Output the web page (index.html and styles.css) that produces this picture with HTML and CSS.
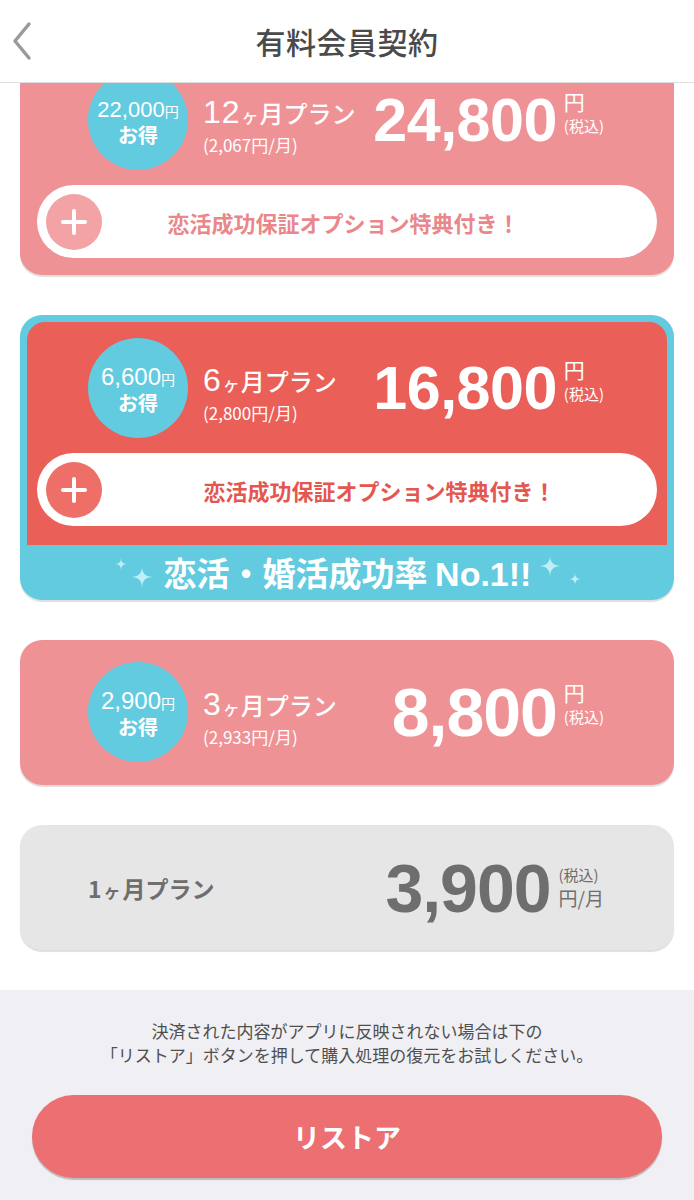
FILE: index.html
```html
<!DOCTYPE html>
<html lang="ja">
<head>
<meta charset="utf-8">
<title>有料会員契約</title>
<link rel="stylesheet" href="styles.css">
</head>
<body>
<header class="nav">
  <div class="nav-left">
    <svg class="back" width="20" height="40" viewBox="0 0 20 40"><polyline points="17,3 3,20 17,37" fill="none" stroke="#9a9a9a" stroke-width="3.5" stroke-linecap="round" stroke-linejoin="round"/></svg>
  </div>
  <h1 class="title">有料会員契約</h1>
  <div class="nav-right"></div>
</header>

<main class="plans">
  <section class="plan pink first">
    <div class="row">
      <div class="badge"><span class="badge-amt small-amt">22,000<small>円</small></span><span class="badge-label">お得</span></div>
      <div class="info">
        <div class="name"><span class="num">12</span><span class="ke">ヶ</span>月プラン</div>
        <div class="sub">(2,067円/月)</div>
      </div>
      <div class="price">
        <span class="price-num">24,800</span>
        <span class="unit"><span class="yen">円</span><span class="tax">(税込)</span></span>
      </div>
    </div>
    <div class="option opt-pink">
      <span class="plus plus-pink"><svg width="56" height="56" viewBox="0 0 56 56"><path d="M28 17V39M17 28H39" stroke="#fff" stroke-width="4" stroke-linecap="round"/></svg></span>
      <span class="opt-text">恋活成功保証オプション特典付き！</span>
    </div>
  </section>

  <section class="plan featured">
    <div class="featured-inner">
      <div class="row">
        <div class="badge"><span class="badge-amt">6,600<small>円</small></span><span class="badge-label">お得</span></div>
        <div class="info">
          <div class="name"><span class="num">6</span><span class="ke">ヶ</span>月プラン</div>
          <div class="sub">(2,800円/月)</div>
        </div>
        <div class="price">
          <span class="price-num">16,800</span>
          <span class="unit"><span class="yen">円</span><span class="tax">(税込)</span></span>
        </div>
      </div>
      <div class="option opt-red">
        <span class="plus plus-red"><svg width="56" height="56" viewBox="0 0 56 56"><path d="M28 17V39M17 28H39" stroke="#fff" stroke-width="4" stroke-linecap="round"/></svg></span>
        <span class="opt-text">恋活成功保証オプション特典付き！</span>
      </div>
    </div>
    <div class="band">
      <svg class="spark" width="44" height="40" viewBox="0 0 44 40"><path d="M11 5Q11 11 17 11Q11 11 11 17Q11 11 5 11Q11 11 11 5Z" fill="#bfeef6"/><path d="M32 13Q32 24 43 24Q32 24 32 35Q32 24 21 24Q32 24 32 13Z" fill="#bfeef6"/></svg>
      <span class="band-text">恋活・婚活成功率 <span class="latin">No.1!!</span></span>
      <svg class="spark" width="46" height="40" viewBox="0 0 46 40"><path d="M12 2Q12 13 23 13Q12 13 12 24Q12 13 1 13Q12 13 12 2Z" fill="#bfeef6"/><path d="M37 20Q37 26 43 26Q37 26 37 32Q37 26 31 26Q37 26 37 20Z" fill="#bfeef6"/></svg>
    </div>
  </section>

  <section class="plan pink p3">
    <div class="row">
      <div class="badge"><span class="badge-amt">2,900<small>円</small></span><span class="badge-label">お得</span></div>
      <div class="info">
        <div class="name"><span class="num">3</span><span class="ke">ヶ</span>月プラン</div>
        <div class="sub">(2,933円/月)</div>
      </div>
      <div class="price">
        <span class="price-num big">8,800</span>
        <span class="unit big-unit"><span class="yen">円</span><span class="tax">(税込)</span></span>
      </div>
    </div>
  </section>

  <section class="plan gray">
    <div class="gray-name"><span class="g-num">1</span><span class="g-ke">ヶ</span>月プラン</div>
    <div class="price gray-price">
      <span class="price-num big">3,900</span>
      <span class="unit g-unit"><span class="tax g-tax">(税込)</span><span class="g-per">円/月</span></span>
    </div>
  </section>
</main>

<footer class="foot">
  <p class="note">決済された内容がアプリに反映されない場合は下の<br>「リストア」ボタンを押して購入処理の復元をお試しください。</p>
  <div class="restore">リストア</div>
</footer>
</body>
</html>
```

FILE: styles.css
```css
html, body {
  margin: 0;
  padding: 0;
}
body {
  width: 694px;
  background: #ffffff;
  font-family: "Noto Sans CJK JP", "Noto Sans", sans-serif;
}

.nav {
  height: 82px;
  border-bottom: 1px solid #dedede;
  display: grid;
  grid-template-columns: 1fr auto 1fr;
  align-items: center;
  background: #fff;
}
.nav-left {
  padding-left: 12px;
  display: flex;
  align-items: center;
}
.back {
  display: block;
}
.title {
  margin: 0;
  font-size: 30px;
  font-weight: 500;
  color: #4a4a4a;
  line-height: 40px;
  letter-spacing: 0.5px;
}

.plans {
  overflow: hidden;
  padding: 0 20px 40px;
}
.plan {
  border-radius: 22px;
  margin-top: 40px;
  box-shadow: 0 2px 1px rgba(0, 0, 0, 0.13);
}
.pink {
  background: #ef9295;
  padding: 16px 0 17px;
}
.first {
  margin-top: -29px;
}
.p3 {
  padding: 22px 0 23px;
}

.row {
  display: flex;
  align-items: center;
  padding: 0 70px 0 68px;
}
.badge {
  width: 100px;
  height: 100px;
  border-radius: 50%;
  background: #62cbdf;
  color: #fff;
  flex: none;
  display: flex;
  flex-direction: column;
  align-items: center;
  justify-content: center;
  padding-top: 4px;
  box-sizing: border-box;
}
.badge-amt {
  font-family: "Liberation Sans", Arial, sans-serif;
  font-size: 24px;
  line-height: 24px;
  white-space: nowrap;
}
.badge-amt.small-amt {
  font-size: 22px;
}
.badge-amt small {
  font-family: "Noto Sans CJK JP", sans-serif;
  font-size: 14px;
}
.badge-label {
  font-size: 20px;
  font-weight: 700;
  line-height: 24px;
}

.info {
  align-self: flex-start;
  margin-top: 26px;
  margin-left: 15px;
  color: #fff;
  white-space: nowrap;
}
.name {
  font-size: 24px;
  font-weight: 500;
  line-height: 32px;
  height: 32px;
  display: flex;
  align-items: baseline;
}
.name .num {
  font-family: "Liberation Sans", Arial, sans-serif;
  font-size: 32px;
  letter-spacing: 1px;
}
.name .ke {
  font-size: 17px;
  margin: 0 1px;
}
.sub {
  margin-top: 6px;
  font-size: 17px;
  line-height: 22px;
}

.price {
  margin-left: auto;
  display: flex;
  align-items: flex-start;
  color: #fff;
}
.price-num {
  font-family: "Liberation Sans", Arial, sans-serif;
  font-weight: 700;
  font-size: 61px;
  line-height: 1;
  letter-spacing: -0.5px;
}
.price-num.big {
  font-size: 68px;
  letter-spacing: -1px;
}
.unit {
  margin-left: 7px;
  display: flex;
  flex-direction: column;
  align-items: flex-start;
  white-space: nowrap;
}
.big-unit {
  padding-top: 3px;
}
.yen {
  font-size: 21px;
  line-height: 22px;
}
.tax {
  font-size: 15px;
  line-height: 18px;
  margin-top: 5px;
}

.option {
  margin: 15px 17px 0;
  height: 73px;
  border-radius: 37px;
  background: #fff;
  display: flex;
  align-items: center;
  padding-left: 9px;
}
.plus {
  width: 56px;
  height: 56px;
  border-radius: 50%;
  flex: none;
}
.plus svg {
  display: block;
}
.plus-pink {
  background: #f3a3a5;
}
.plus-red {
  background: #ee6f68;
}
.opt-text {
  flex: 1;
  text-align: center;
  font-size: 22px;
  font-weight: 700;
  white-space: nowrap;
}
.opt-pink .opt-text {
  color: #ea878a;
  margin-right: 72px;
}
.opt-red {
  margin: 15px 10px 0;
}
.opt-red .opt-text {
  color: #e45750;
}

.featured {
  background: #62cbdf;
  padding: 7px 7px 0;
}
.featured-inner {
  background: #ea5f58;
  border-radius: 18px 18px 0 0;
  padding: 16px 0 19px;
}
.featured .row {
  padding: 0 63px 0 61px;
}
.band {
  height: 55px;
  display: flex;
  align-items: center;
  justify-content: center;
  color: #fff;
  font-size: 33px;
  font-weight: 700;
}
.band-text {
  margin: 0 7px 0 10px;
  white-space: nowrap;
  line-height: 40px;
}
.band-text .latin {
  font-family: "Liberation Sans", Arial, sans-serif;
  font-size: 34px;
}
.spark {
  display: block;
}

.gray {
  background: #e6e6e6;
  height: 125px;
  display: flex;
  align-items: center;
  padding: 0 70px 0 68px;
  color: #6e6e6e;
}
.gray-name {
  font-size: 23px;
  font-weight: 700;
  white-space: nowrap;
  display: flex;
  align-items: baseline;
}
.g-num {
  font-size: 23px;
}
.g-ke {
  font-size: 17px;
  margin: 0 2px;
}
.gray-price {
  color: #6e6e6e;
  align-items: center;
}
.g-unit {
  margin-left: 8px;
}
.g-tax {
  margin-top: 0;
  font-size: 15px;
  line-height: 20px;
}
.g-per {
  font-size: 19px;
  line-height: 26px;
}

.foot {
  background: #efeff4;
  padding: 29px 0 22px;
  text-align: center;
}
.note {
  margin: 0;
  font-size: 17px;
  line-height: 24px;
  color: #4f4f4f;
}
.restore {
  margin: 28px 32px 0;
  height: 83px;
  border-radius: 42px;
  background: #ec6f72;
  box-shadow: 0 2px 1px rgba(0, 0, 0, 0.22);
  color: #fff;
  font-size: 27px;
  font-weight: 700;
  display: flex;
  align-items: center;
  justify-content: center;
}
```
